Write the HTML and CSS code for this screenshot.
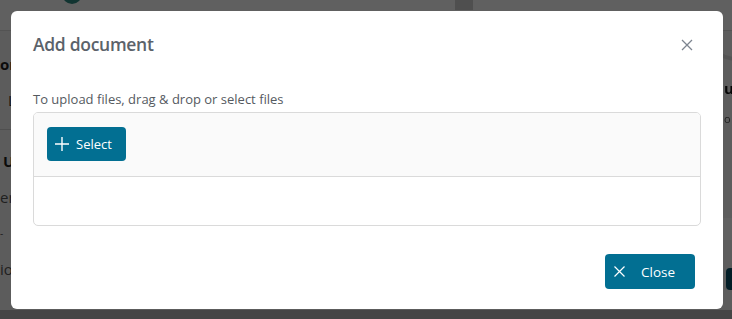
FILE: index.html
```html
<!DOCTYPE html>
<html lang="en">
<head>
  <meta charset="UTF-8" />
  <meta name="viewport" content="width=device-width, initial-scale=1.0" />
  <title>Add document</title>
  <link rel="stylesheet" href="styles.css">
</head>
<body>
  <!-- page behind the dialog -->
  <div class="page">
    <div class="topbar">
      <span class="avatar"></span>
      <span class="tab"></span>
    </div>
    <div class="content">
      <div class="panel left">
        <h3>or</h3>
        <p class="indent">Le</p>
        <hr>
        <h3 class="indent-s">U</h3>
        <p>er</p>
        <p class="small">-</p>
        <p>io</p>
      </div>
      <div class="panel right">
        <span class="ring"></span>
        <h3>u</h3>
        <p>o</p>
        <div class="band"></div>
        <span class="mini-btn"></span>
      </div>
    </div>
    <div class="footer"></div>
  </div>

  <div class="backdrop"></div>

  <div class="modal">
    <div class="modal-header">
      <h2>Add document</h2>
      <button class="icon-close" aria-label="Close">
        <svg width="12" height="12" viewBox="0 0 12 12"><path d="M1 1 L11 11 M11 1 L1 11" stroke="#7d8590" stroke-width="1.3" fill="none"/></svg>
      </button>
    </div>

    <div class="modal-body">
      <p class="hint">To upload files, drag &amp; drop or select files</p>
      <div class="upload">
        <div class="upload-bar">
          <button class="btn">
            <svg width="14" height="14" viewBox="0 0 14 14"><path d="M7 0 V14 M0 7 H14" stroke="#fff" stroke-width="1.4" fill="none"/></svg>
            Select
          </button>
        </div>
        <div class="upload-list"></div>
      </div>
    </div>

    <div class="modal-footer">
      <button class="btn btn-close">
        <svg width="11" height="11" viewBox="0 0 11 11"><path d="M0.5 0.5 L10.5 10.5 M10.5 0.5 L0.5 10.5" stroke="#fff" stroke-width="1.2" fill="none"/></svg>
        Close
      </button>
    </div>
  </div>
</body>
</html>
```

FILE: styles.css
```css
* {
  box-sizing: border-box;
}

body {
  margin: 0;
  font-family: "Open Sans", "Noto Sans", sans-serif;
  background: #f7f7f7;
  overflow: hidden;
  height: 319px;
}

/* background page */
.page {
  height: 319px;
  display: flex;
  flex-direction: column;
  filter: blur(0.5px);
}

.topbar {
  height: 31px;
  background: #fbfbfb;
  border-bottom: 1px solid #dadada;
  display: flex;
  align-items: flex-start;
}

.avatar {
  width: 20px;
  height: 20px;
  border-radius: 50%;
  background: #2e8a80;
  margin: -16px 0 0 62px;
}

.tab {
  width: 18px;
  height: 10px;
  background: #d0d0d0;
  margin-left: 373px;
}

.content {
  flex: 1;
  display: flex;
}

.panel {
  background: #f1f1f1;
  overflow: hidden;
}

.left {
  width: 470px;
  padding-top: 22px;
}

.left h3 {
  margin: 0;
  font-size: 15px;
  font-weight: 700;
  color: #1e1e1e;
  line-height: 22px;
}

.left p {
  margin: 14px 0 0;
  font-size: 15px;
  color: #555;
  line-height: 22px;
}

.left .indent {
  padding-left: 8px;
  color: #333;
}

.indent-s {
  padding-left: 3px;
}

.left hr {
  border: none;
  border-top: 1px solid #d0d0d0;
  margin: 18px 0 20px;
}

.left .small {
  font-size: 10px;
  margin-top: 14px;
}

.right {
  flex: 1;
  position: relative;
  margin-left: 20px;
  padding: 46px 0 0 234px;
  background: #f4f4f4;
}

.right h3 {
  margin: 0;
  font-size: 15px;
  font-weight: 700;
  color: #111;
  line-height: 22px;
}

.right p {
  margin: 12px 0 0;
  font-size: 11px;
  color: #555;
}

.band {
  height: 22px;
  background: #ffffff;
  margin: 92px 0 0 -20px;
}

.mini-btn {
  display: block;
  width: 30px;
  height: 22px;
  border-radius: 4px;
  background: #0a4f66;
  margin: 28px 0 0 2px;
}

.ring {
  position: absolute;
  top: -40px;
  right: -40px;
  width: 70px;
  height: 70px;
  border-radius: 50%;
  border: 4px solid #dcdcdc;
}

.footer {
  height: 9px;
  background: #b6b6b6;
}

.backdrop {
  position: fixed;
  inset: 0;
  background: rgba(0, 0, 0, 0.62);
}

/* dialog */
.modal {
  position: fixed;
  top: 11px;
  left: 11px;
  width: 712px;
  height: 298px;
  background: #fff;
  border-radius: 6px;
  display: flex;
  flex-direction: column;
  padding: 0 28px 20px 22px;
}

.modal-header {
  display: flex;
  align-items: center;
  justify-content: space-between;
  height: 66px;
  padding-bottom: 1px;
}

.modal-header h2 {
  margin: 0;
  font-size: 17.5px;
  letter-spacing: -0.3px;
  font-weight: 600;
  color: #5b626a;
}

.icon-close {
  border: none;
  background: none;
  padding: 0;
  width: 12px;
  height: 12px;
  margin-right: 2px;
  margin-top: 3px;
  cursor: pointer;
}

.modal-body {
  flex: 1;
  padding-top: 13px;
}

.hint {
  margin: 0 0 4px;
  font-size: 13px;
  line-height: 18px;
  color: #555a5f;
}

.upload {
  width: 668px;
  border: 1px solid #dadada;
  border-radius: 5px;
  overflow: hidden;
}

.upload-bar {
  background: #fafafa;
  padding: 14px 13px 15px;
  border-bottom: 1px solid #dadada;
}

.upload-list {
  height: 48px;
}

.btn {
  display: inline-flex;
  align-items: center;
  border: none;
  border-radius: 4px;
  background: #026f92;
  color: #fff;
  font-family: "Open Sans", "Noto Sans", sans-serif;
  font-size: 13px;
  height: 34px;
  width: 79px;
  padding: 0 0 0 8px;
  gap: 7px;
  cursor: pointer;
}

.modal-footer {
  display: flex;
  justify-content: flex-end;
}

.btn-close {
  width: 90px;
  height: 35px;
  padding-left: 9px;
  gap: 16px;
  font-size: 13.5px;
}
```
